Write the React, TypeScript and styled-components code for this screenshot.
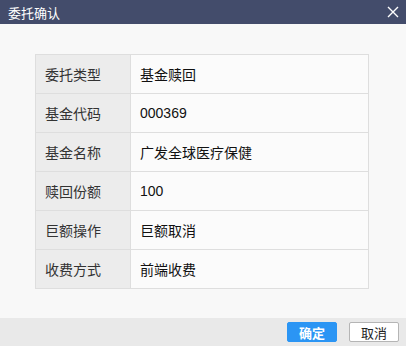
import styled, { createGlobalStyle } from "styled-components";

const GlobalStyle = createGlobalStyle`
  html, body {
    margin: 0;
    padding: 0;
    background: #f8f8f8;
  }
  body {
    font-family: "Liberation Sans", "Noto Sans CJK SC", sans-serif;
  }
`;

const Dialog = styled.div`
  width: 406px;
  height: 346px;
  display: flex;
  flex-direction: column;
  background: #f8f8f8;
`;

const TitleBar = styled.div`
  height: 24px;
  background: #434c6b;
  color: #ffffff;
  display: flex;
  align-items: center;
  justify-content: space-between;
  padding: 0 7px 0 8px;
  font-size: 13px;
`;

const Close = styled.button`
  border: 0;
  background: none;
  padding: 0;
  width: 12px;
  height: 12px;
  display: flex;
  cursor: pointer;
`;

const Body = styled.div`
  flex: 1;
  padding: 30px 37px 0 35px;
`;

const Table = styled.div`
  border: 1px solid #dedede;
  border-bottom: 0;
`;

const Row = styled.div`
  display: flex;
  height: 38px;
  border-bottom: 1px solid #dedede;
`;

const Label = styled.div`
  width: 85px;
  padding-left: 9px;
  background: #ececec;
  border-right: 1px solid #dedede;
  display: flex;
  align-items: center;
  font-size: 14px;
  color: #333333;
`;

const Value = styled.div`
  flex: 1;
  padding-left: 9px;
  background: #fbfbfb;
  display: flex;
  align-items: center;
  font-size: 14px;
  color: #111111;
`;

const Footer = styled.div`
  height: 28px;
  background: #e9e9e9;
  display: flex;
  align-items: center;
  justify-content: flex-end;
  gap: 12px;
  padding-right: 7px;
`;

const Button = styled.button<{ $primary?: boolean }>`
  width: 50px;
  height: 20px;
  padding: 0;
  font-family: inherit;
  font-size: 13px;
  font-weight: ${(p) => (p.$primary ? 700 : 400)};
  color: ${(p) => (p.$primary ? "#ffffff" : "#222222")};
  background: ${(p) => (p.$primary ? "#2b95f4" : "#ffffff")};
  border: 1px solid ${(p) => (p.$primary ? "#2b95f4" : "#b5b5b5")};
  border-radius: 2px;
  cursor: pointer;
`;

const rows = [
  ["委托类型", "基金赎回"],
  ["基金代码", "000369"],
  ["基金名称", "广发全球医疗保健"],
  ["赎回份额", "100"],
  ["巨额操作", "巨额取消"],
  ["收费方式", "前端收费"],
];

const App = () => {
  return (
    <>
      <GlobalStyle />
      <Dialog>
        <TitleBar>
          <span>委托确认</span>
          <Close aria-label="关闭">
            <svg width="12" height="12" viewBox="0 0 12 12">
              <path d="M1 1L11 11M11 1L1 11" stroke="#ffffff" strokeWidth="1.4" />
            </svg>
          </Close>
        </TitleBar>
        <Body>
          <Table>
            {rows.map(([k, v]) => (
              <Row key={k}>
                <Label>{k}</Label>
                <Value>{v}</Value>
              </Row>
            ))}
          </Table>
        </Body>
        <Footer>
          <Button $primary>确定</Button>
          <Button>取消</Button>
        </Footer>
      </Dialog>
    </>
  );
};

export default App;
